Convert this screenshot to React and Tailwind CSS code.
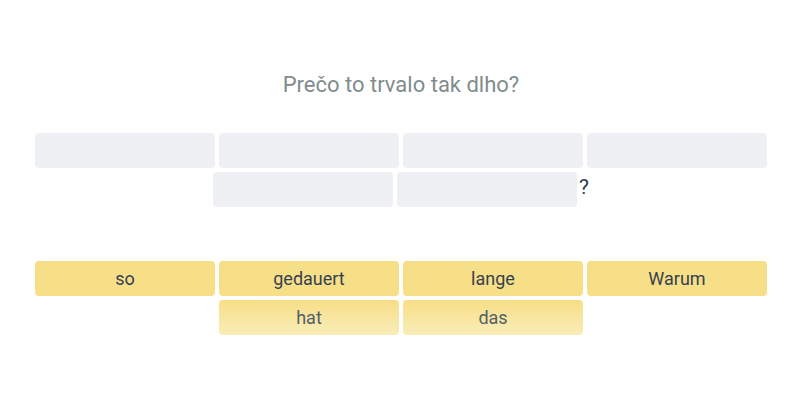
import React from "react";

const blanks = [1, 2, 3, 4, 5, 6];
const topWords = ["so", "gedauert", "lange", "Warum"];
const fadedWords = ["hat", "das"];

const App = () => {
  return (
    <div
      className="w-[800px] h-[400px] bg-white overflow-hidden"
      style={{ fontFamily: "Roboto, 'Liberation Sans', sans-serif" }}
    >
      <div className="w-[732px] ml-[35px] pt-[70px]">
        <p className="text-center text-[22px] leading-[30px] text-[#7f8c8d]">
          Prečo to trvalo tak dlho?
        </p>

        <div className="mt-[33px] flex flex-wrap justify-center gap-1">
          {blanks.map((b) => (
            <div key={b} className="w-[180px] h-[35px] rounded-[4px] bg-[#eff0f4]" />
          ))}
          <span className="-ml-[2px] text-[21px] leading-[30px] text-[#2c3e50]">?</span>
        </div>

        <div className="mt-[54px] flex flex-wrap justify-center gap-1">
          {topWords.map((w) => (
            <button
              key={w}
              className="w-[180px] h-[35px] rounded-[4px] bg-[#f7df87] text-[18px] text-[#364150]"
            >
              {w}
            </button>
          ))}
          {fadedWords.map((w) => (
            <button
              key={w}
              className="w-[180px] h-[35px] rounded-[4px] bg-gradient-to-b from-[#f7de86] to-[#f9edb8] text-[18px] text-[#545e6a]"
            >
              {w}
            </button>
          ))}
        </div>
      </div>
    </div>
  );
};

export default App;
